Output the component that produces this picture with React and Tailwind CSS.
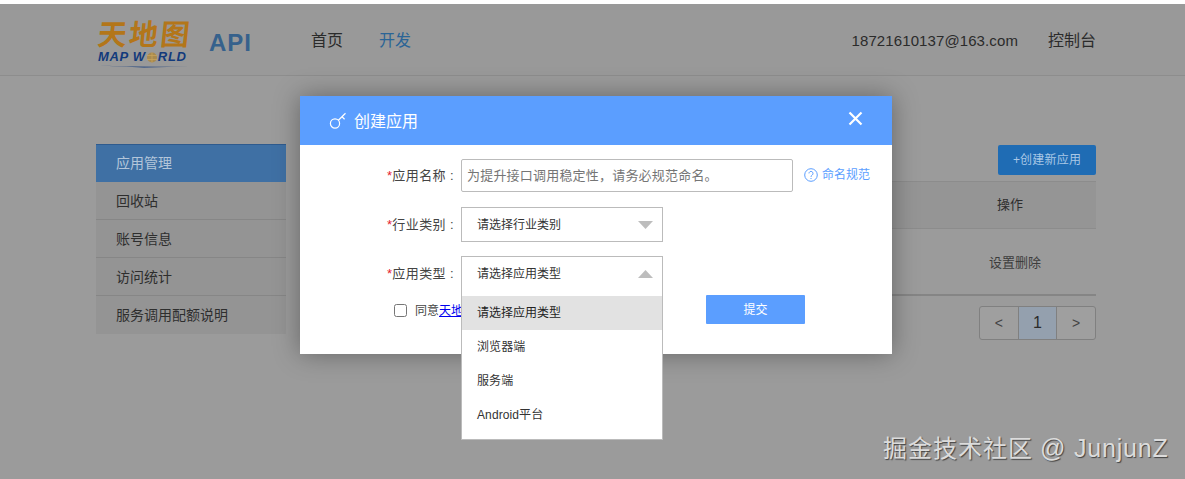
import React from "react";

const FONT = '"Liberation Sans","Noto Sans CJK SC",sans-serif';

const sideItems = ["回收站", "账号信息", "访问统计", "服务调用配额说明"];
const options = ["浏览器端", "服务端", "Android平台"];

const Caret = ({ up }) => (
  <svg width="15" height="8" viewBox="0 0 15 8" className="shrink-0">
    <polygon points={up ? "0,8 15,8 7.5,0" : "0,0 15,0 7.5,8"} fill="#bdbdbd" />
  </svg>
);

const KeyIcon = () => (
  <svg width="18" height="18" viewBox="0 0 18 18" fill="none" stroke="#fff" strokeWidth="1.2">
    <circle cx="6" cy="11.5" r="4.6" />
    <path d="M9.4 8.2 16.5 1.2M13 4.8l2.6 2.4" />
  </svg>
);

const Logo = () => (
  <div className="flex flex-col w-[92px] mt-[2px]">
    <div className="flex justify-between text-[#b3761a] text-[29px] leading-[30px] font-bold font-['Noto_Sans_CJK_SC',serif] -skew-x-6">
      <span>天</span>
      <span>地</span>
      <span>图</span>
    </div>
    <div className="flex items-center text-[#123a7c] text-[13px] leading-[14px] font-bold italic tracking-[0.7px] mt-[3px]">
      <span>MAP W</span>
      <svg width="12" height="11" viewBox="0 0 12 11" className="shrink-0">
        <circle cx="6" cy="5.5" r="5" fill="#a98a4e" />
        <path d="M1 3.5h10M1 7.5h10M6 .5v10" stroke="#c9a35a" strokeWidth="0.8" />
      </svg>
      <span>RLD</span>
    </div>
    <svg width="92" height="3" viewBox="0 0 92 3" className="mt-[1px]">
      <path d="M0 0.6Q46 2.6 92 1.4L46 2.6Z" fill="#123a7c" />
    </svg>
  </div>
);

const FormLabel = ({ children }) => (
  <label className="w-[161px] pr-[7px] text-right text-[13px] tracking-[0.4px] text-[#444] shrink-0">
    <span className="text-[#e5202e]">*</span>
    {children} :
  </label>
);

export default function App() {
  return (
    <div className="relative w-[1185px] h-[479px] overflow-hidden bg-white" style={{ fontFamily: FONT }}>
      <div className="mt-[4px] h-[475px] bg-[#9b9b9b]">
        <header className="h-[72px] border-b border-[#8d8d8d] flex items-center pl-[98px] pr-[89px] pt-[4px] bg-[#999]">
          <Logo />
          <span className="ml-[19px] mt-[3px] text-[24px] font-bold tracking-[1px] text-[#36618c]">API</span>
          <nav className="ml-[59px] flex gap-[36px] text-[16px] mt-[-1px]">
            <span className="text-[#2b2b2b]">首页</span>
            <span className="text-[#2a6496]">开发</span>
          </nav>
          <div className="ml-auto flex gap-[30px] mt-[-1px] text-[#2b2b2b]">
            <span className="text-[15px] leading-[24px] tracking-[0.1px]">18721610137@163.com</span>
            <span className="text-[16px] leading-[24px]">控制台</span>
          </div>
        </header>

        <main className="flex pl-[96px] pt-[68px]">
          <aside className="w-[190px] shrink-0 text-[14px]">
            <div className="h-[38px] flex items-center pl-[20px] bg-[#3f70a4] border-t border-[#2f5b8e] text-[#b4c6da]">应用管理</div>
            {sideItems.map((item, i) => (
              <div
                key={item}
                className={`h-[38px] flex items-center pl-[20px] bg-[#949494] text-[#2e2e2e] ${i < 3 ? "border-b border-[#868686] pt-[2px]" : ""}`}
              >
                {item}
              </div>
            ))}
          </aside>

          <section className="ml-[20px] w-[790px] flex flex-col items-end">
            <button className="mt-[1px] w-[98px] h-[30px] rounded-[2px] bg-[#1f6cb4] text-[#a9c8e6] text-[12px] tracking-[0.2px]">+创建新应用</button>
            <div className="w-full mt-[6px] h-[48px] flex items-center justify-end border-y border-[#8c8c8c] bg-[#959595] text-[13px] text-[#2e2e2e] pr-[73px]">操作</div>
            <div className="w-full h-[67px] flex items-center justify-end border-b-2 border-[#858585] text-[13px] text-[#3d3d3d] pr-[55px] pt-[2px]">设置删除</div>
            <div className="mt-[10px] flex h-[34px] w-[117px] rounded-[3px] border border-[#808080] text-[#2b2b2b] text-[14px] overflow-hidden bg-[#9f9f9f]">
              <span className="flex-1 flex items-center justify-center text-[#444]">&lt;</span>
              <span className="flex-1 flex items-center justify-center text-[16px] bg-[#94a0ae] border-x border-[#808080]">1</span>
              <span className="flex-1 flex items-center justify-center text-[#444]">&gt;</span>
            </div>
          </section>
        </main>
      </div>

      {/* modal */}
      <div className="absolute left-[300px] top-[96px] w-[592px] h-[258px] bg-white shadow-[0_0_24px_rgba(0,0,0,0.35)]">
        <div className="h-[49px] bg-[#5b9eff] flex items-center pl-[29px] pr-[29px] text-white">
          <KeyIcon />
          <span className="ml-[7px] text-[16px] mt-[3px]">创建应用</span>
          <svg width="15" height="15" viewBox="0 0 15 15" className="ml-auto mb-[4px]" stroke="#fff" strokeWidth="2.2">
            <path d="M1.5 1.5l12 12M13.5 1.5l-12 12" />
          </svg>
        </div>

        <div className="pt-[14px]">
          <div className="flex items-center h-[33px]">
            <FormLabel>应用名称</FormLabel>
            <div className="w-[332px] h-[33px] border border-[#bbb] rounded-[2px] flex items-center pl-[5px] text-[13px] tracking-[0.2px] text-[#757575]">
              为提升接口调用稳定性，请务必规范命名。
            </div>
            <a className="ml-[11px] flex items-center gap-[4px] text-[12px] text-[#5b9eff] mb-[2px]">
              <svg width="14" height="14" viewBox="0 0 14 14" fill="none" stroke="#5b9eff" strokeWidth="1">
                <circle cx="7" cy="7" r="6.3" />
                <path d="M5 5.4a2 2 0 1 1 3.2 1.6C7.4 7.6 7 8 7 8.9M7 10v1" />
              </svg>
              命名规范
            </a>
          </div>

          <div className="flex items-center mt-[15px]">
            <FormLabel>行业类别</FormLabel>
            <div className="w-[202px] h-[35px] border border-[#bbb] bg-white flex items-center justify-between pl-[15px] pr-[9px] text-[12px] text-[#333]">
              <span>请选择行业类别</span>
              <Caret />
            </div>
          </div>

          <div className="flex items-center mt-[14px]">
            <FormLabel>应用类型</FormLabel>
            <div className="w-[202px] h-[35px]" />
          </div>

          <div className="flex items-start mt-[4px] pl-[94px]">
            <input type="checkbox" className="w-[13px] h-[13px] mt-[9px] accent-white" />
            <span className="ml-[8px] mt-[7px] text-[12px] text-[#444]">
              同意<a className="text-[#0000ee] underline">天地图</a>
            </span>
            <button className="ml-[231px] w-[99px] h-[29px] rounded-[1px] bg-[#5b9eff] text-white text-[12px]">提交</button>
          </div>
        </div>
      </div>

      {/* open dropdown */}
      <div className="absolute left-[461px] top-[256px] w-[202px] h-[184px] bg-white border border-[#bbb] text-[12px] text-[#333]">
        <div className="h-[39px] flex items-center justify-between pl-[15px] pr-[9px] pb-[6px]">
          <span>请选择应用类型</span>
          <Caret up />
        </div>
        <div className="h-[34px] flex items-center pl-[15px] bg-[#e2e2e2] text-[#222]">请选择应用类型</div>
        {options.map((o) => (
          <div key={o} className="h-[34px] flex items-center pl-[15px] tracking-[0.1px]">{o}</div>
        ))}
      </div>

      <div className="absolute left-[883px] top-[431px] text-[24px] leading-[34px] tracking-[1px] whitespace-nowrap text-[#dcdcdc] [text-shadow:1px_1px_1px_#444]">
        掘金技术社区<span className="ml-[7px] text-[25px] tracking-[0.8px]">@ JunjunZ</span>
      </div>
    </div>
  );
}
